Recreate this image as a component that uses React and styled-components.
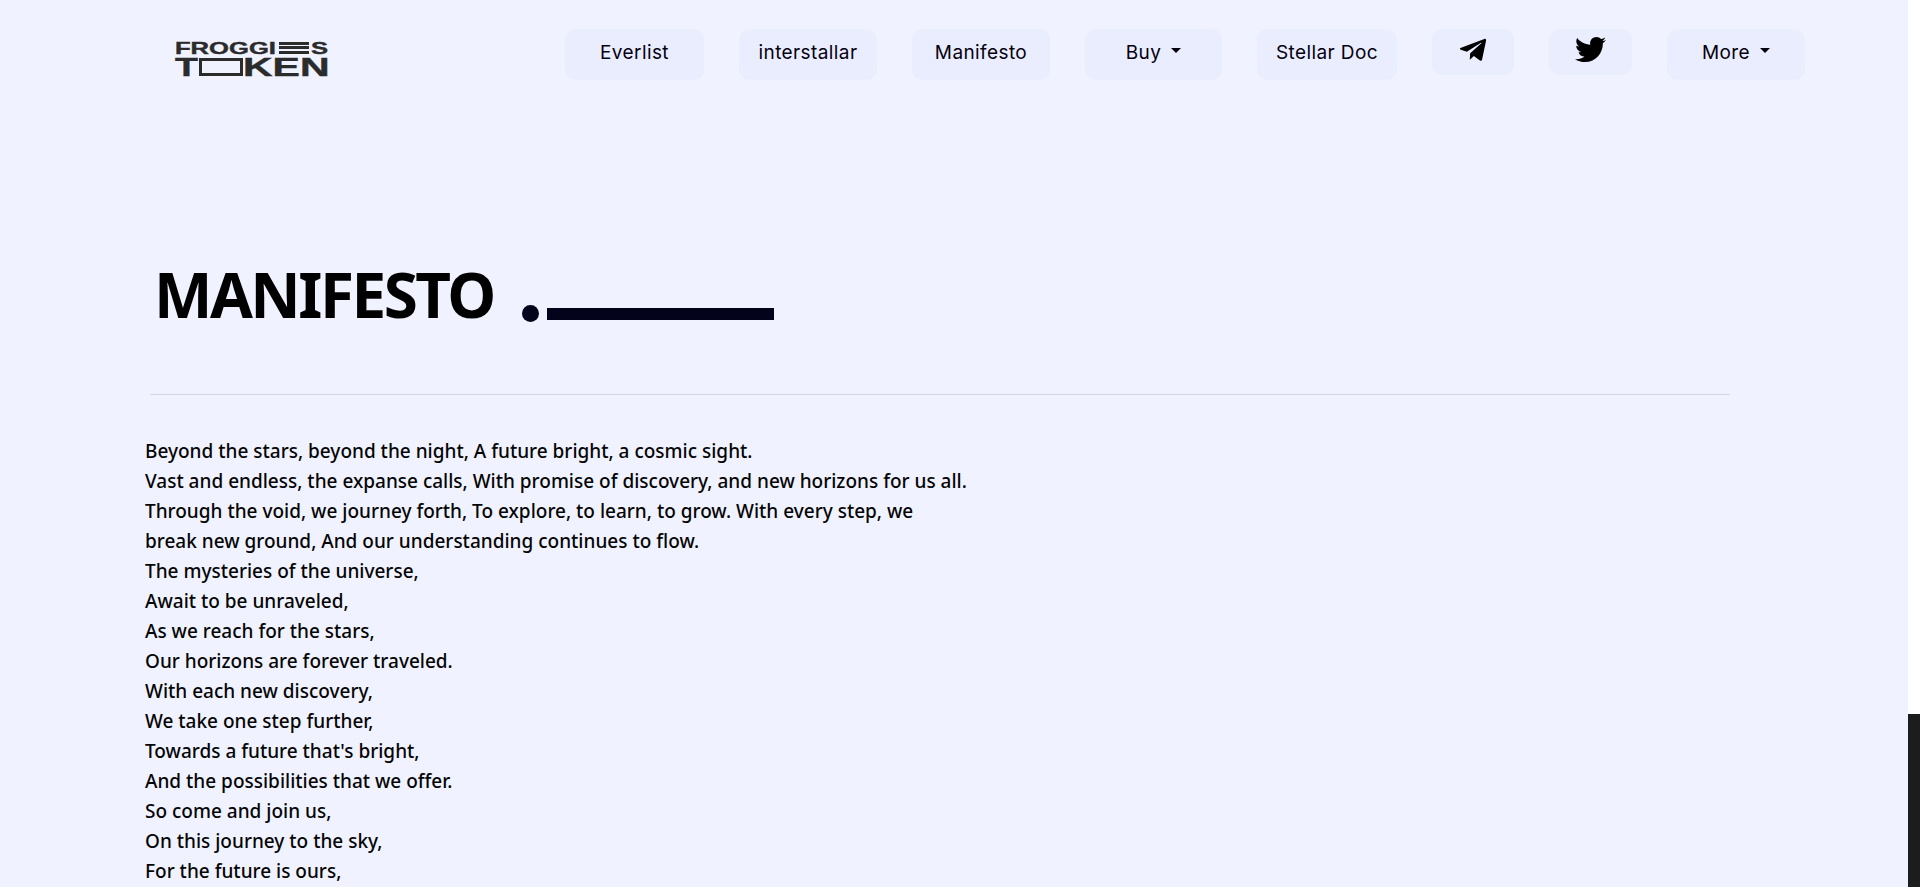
import React from 'react';
import styled, { createGlobalStyle } from 'styled-components';
import { FaTelegramPlane, FaTwitter } from 'react-icons/fa';

const GlobalStyle = createGlobalStyle`
    html, body {
        margin: 0;
        height: 100%;
        overflow: hidden;
        background: #f0f3ff;
    }
`;

const Shell = styled.div`
    display: grid;
    grid-template-columns: 1fr 12px;
    height: 887px;
    overflow: hidden;
`;

const Page = styled.div`
    overflow: hidden;
    background: #f0f3ff;
    color: #000;
`;

const Rail = styled.div`
    display: flex;
    flex-direction: column;
    justify-content: flex-end;
    background: #fff;
`;

const Thumb = styled.div`
    height: 173px;
    background: #1c1c1c;
`;

const Navbar = styled.header`
    display: flex;
    justify-content: space-between;
    align-items: flex-start;
    height: 80px;
    padding: 29px 103px 0 175px;
`;

const Logo = styled.div`
    display: flex;
    flex-direction: column;
    gap: 4px;
    width: 154px;
    margin-top: 13px;
    color: #2b2b2b;
    font-family: "Liberation Sans", Arial, sans-serif;
    font-weight: 700;
`;

const LogoRow = styled.div`
    display: flex;
    align-items: center;
    gap: ${(p) => p.$gap}px;
    height: ${(p) => p.$height}px;
    line-height: ${(p) => p.$height}px;
    font-size: ${(p) => p.$size}px;
    white-space: nowrap;
`;

const LogoWord = styled.span`
    display: inline-block;
    width: ${(p) => p.$width}px;
    transform: scaleX(${(p) => p.$stretch});
    transform-origin: left center;
    -webkit-text-stroke: 0.4px #2b2b2b;
`;

const LogoBars = styled.span`
    display: inline-block;
    width: 30px;
    height: 12px;
    background: repeating-linear-gradient(to bottom, #2b2b2b 0 3px, transparent 3px 4.5px);
`;

const LogoBox = styled.span`
    display: inline-block;
    box-sizing: border-box;
    width: 44px;
    height: 18px;
    border: 3px solid #2b2b2b;
`;

const Menu = styled.nav`
    display: flex;
    align-items: flex-start;
    gap: 35px;
`;

const MenuItem = styled.a`
    display: flex;
    align-items: center;
    justify-content: center;
    box-sizing: border-box;
    width: ${(p) => p.$width}px;
    height: ${(p) => p.$height || 51}px;
    padding-bottom: 5px;
    border-radius: 10px;
    background: #eaedfe;
    color: #04000f;
    font-family: Inter, "Noto Sans", sans-serif;
    font-size: 19px;
    letter-spacing: 0.4px;
    white-space: nowrap;
`;

const Caret = styled.span`
    display: inline-block;
    margin: -3px 0 0 10px;
    border-top: 5.5px solid #04000f;
    border-left: 5.5px solid transparent;
    border-right: 5.5px solid transparent;
`;

const Main = styled.main`
    padding: 0 178px 0 145px;
`;

const TitleRow = styled.div`
    display: flex;
    align-items: flex-end;
    height: 228px;
    padding-left: 9px;
`;

const Title = styled.h1`
    margin: 0;
    color: #000;
    font-family: "Noto Sans", "Open Sans", sans-serif;
    font-size: 62px;
    font-weight: 700;
    line-height: 85px;
    letter-spacing: -2.5px;
`;

const TitleMark = styled.div`
    display: flex;
    align-items: center;
    gap: 8px;
    margin: 0 0 15px 28px;
`;

const Dot = styled.span`
    width: 17px;
    height: 17px;
    border-radius: 50%;
    background: #03031c;
`;

const Bar = styled.span`
    width: 227px;
    height: 12px;
    background: #03031c;
`;

const Rule = styled.hr`
    height: 1px;
    margin: 57px 0 0 5px;
    border: 0;
    background: #d4d6e3;
`;

const Poem = styled.div`
    margin-top: 41px;
    font-family: "Noto Sans", "Open Sans", sans-serif;
    font-size: 19px;
    font-weight: 500;
    line-height: 30px;
    color: #050505;
`;

const Line = styled.div`
    white-space: nowrap;
`;

const LINES = [
    'Beyond the stars, beyond the night, A future bright, a cosmic sight.',
    'Vast and endless, the expanse calls, With promise of discovery, and new horizons for us all.',
    'Through the void, we journey forth, To explore, to learn, to grow. With every step, we',
    'break new ground, And our understanding continues to flow.',
    'The mysteries of the universe,',
    'Await to be unraveled,',
    'As we reach for the stars,',
    'Our horizons are forever traveled.',
    'With each new discovery,',
    'We take one step further,',
    "Towards a future that's bright,",
    'And the possibilities that we offer.',
    'So come and join us,',
    'On this journey to the sky,',
    'For the future is ours,',
];

function App() {
    return <>
        <GlobalStyle />
        <Shell>
            <Page>
                <Navbar>
                    <Logo>
                        <LogoRow $height={12} $size={16.5} $gap={2}>
                            <LogoWord $width={102} $stretch={1.55}>FROGGI</LogoWord>
                            <LogoBars />
                            <LogoWord $width={17} $stretch={1.55}>S</LogoWord>
                        </LogoRow>
                        <LogoRow $height={18} $size={25} $gap={0}>
                            <LogoWord $width={24} $stretch={1.5}>T</LogoWord>
                            <LogoBox />
                            <LogoWord $width={86} $stretch={1.64}>KEN</LogoWord>
                        </LogoRow>
                    </Logo>
                    <Menu>
                        <MenuItem $width={139}>Everlist</MenuItem>
                        <MenuItem $width={138}>interstallar</MenuItem>
                        <MenuItem $width={138}>Manifesto</MenuItem>
                        <MenuItem $width={137}>Buy<Caret /></MenuItem>
                        <MenuItem $width={140}>Stellar Doc</MenuItem>
                        <MenuItem $width={82} $height={46}><FaTelegramPlane size={30} color="#000" /></MenuItem>
                        <MenuItem $width={83} $height={46}><FaTwitter size={31} color="#000" /></MenuItem>
                        <MenuItem $width={138}>More<Caret /></MenuItem>
                    </Menu>
                </Navbar>
                <Main>
                    <TitleRow>
                        <Title>MANIFESTO</Title>
                        <TitleMark>
                            <Dot />
                            <Bar />
                        </TitleMark>
                    </TitleRow>
                    <Rule />
                    <Poem>
                        {LINES.map((line) => <Line key={line}>{line}</Line>)}
                    </Poem>
                </Main>
            </Page>
            <Rail>
                <Thumb />
            </Rail>
        </Shell>
    </>;
}

export default App;
